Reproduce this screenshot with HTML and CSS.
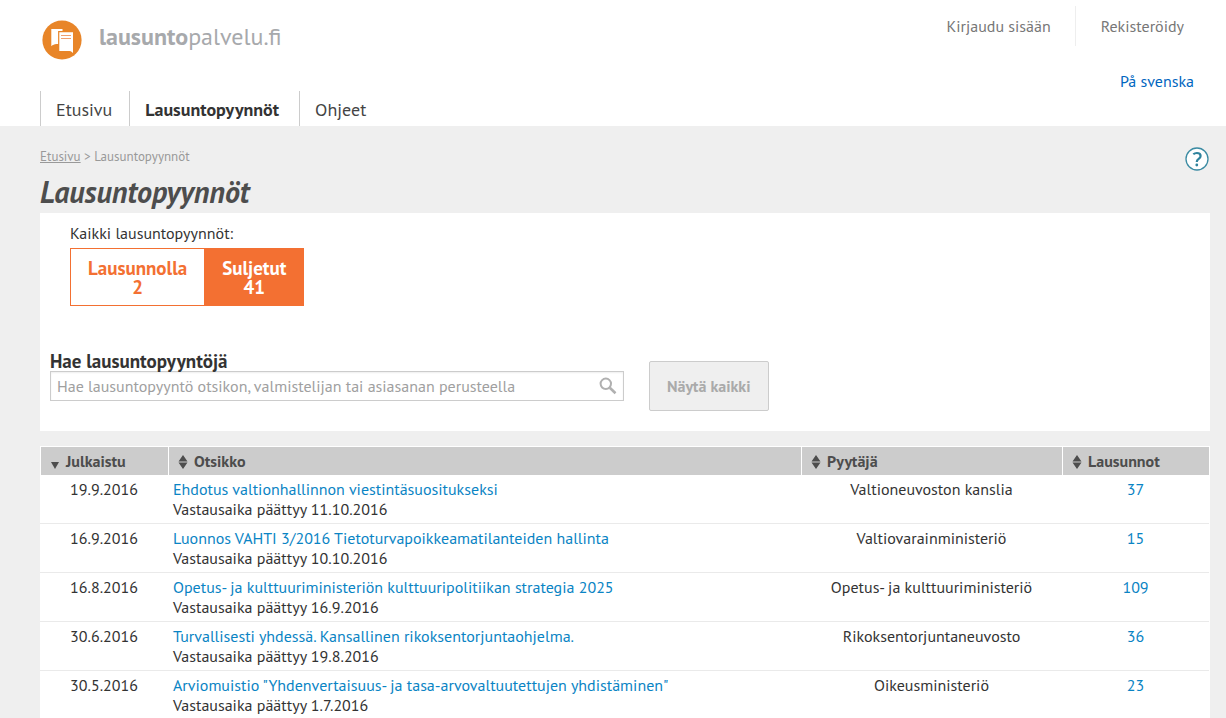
FILE: index.html
```html
<!DOCTYPE html>
<html lang="fi">
<head>
<meta charset="utf-8">
<title>Lausuntopyynnöt - lausuntopalvelu.fi</title>
<meta name="viewport" content="width=device-width, initial-scale=1">
<link rel="stylesheet" href="styles.css">
</head>
<body>
<header class="site-header">
  <div class="brand-column">
    <a class="brand" href="#">
      <svg class="brand-icon" viewBox="0 0 40 40" aria-hidden="true">
        <circle cx="20" cy="20" r="19.6" fill="#e88528"/>
        <path d="M9.300 9h11.200v15h-5c-2.500-.4-4.500.6-6.200 2.200z" fill="#fff"/>
        <path d="M17.300 12.200h13.700v20.800c-1.500-1.700-3-2-5-2h-8.700z" fill="#fff" stroke="#e88528" stroke-width="2.400" paint-order="stroke"/>
        <path d="M19 15.500h10M19 18.500h10" stroke="#f0a070" stroke-width="1.200"/>
      </svg>
      <span class="brand-name"><strong>lausunto</strong>palvelu.fi</span>
    </a>
    <nav class="main-nav">
      <a href="#">Etusivu</a>
      <a class="current" href="#">Lausuntopyynnöt</a>
      <a href="#">Ohjeet</a>
    </nav>
  </div>
  <div class="account-column">
    <div class="account-links">
      <a href="#">Kirjaudu sisään</a>
      <a href="#">Rekisteröidy</a>
    </div>
    <a class="language" href="#">På svenska</a>
  </div>
</header>

<main class="page">
  <div class="page-head">
    <div>
      <p class="breadcrumb"><a href="#">Etusivu</a> &gt; Lausuntopyynnöt</p>
      <h1>Lausuntopyynnöt</h1>
    </div>
    <button class="help" type="button" aria-label="Ohje">
      <svg viewBox="0 0 24 24" aria-hidden="true">
        <circle cx="12" cy="12" r="11" fill="#fff" stroke="#3b8ba3" stroke-width="1.300"/>
        <path d="M8.300 7.300c1-.9 2.200-1.300 3.600-1.300 2.200 0 3.700 1.200 3.700 3 0 2.900-3.800 2.900-3.800 5.700v.4" fill="none" stroke="#2f839d" stroke-width="2.200"/>
        <circle cx="11.800" cy="18" r="1.400" fill="#2f839d"/>
      </svg>
    </button>
  </div>

  <section class="panel">
    <div class="filter">
      <p>Kaikki lausuntopyynnöt:</p>
      <div class="tabs">
        <button class="tab" type="button"><span>Lausunnolla</span><span>2</span></button>
        <button class="tab selected" type="button"><span>Suljetut</span><span>41</span></button>
      </div>
    </div>
    <form class="search">
      <div class="search-field">
        <label for="query">Hae lausuntopyyntöjä</label>
        <div class="search-box">
          <input id="query" type="text" placeholder="Hae lausuntopyyntö otsikon, valmistelijan tai asiasanan perusteella">
          <button class="search-button" type="submit" aria-label="Hae">
            <svg viewBox="0 0 18 18" aria-hidden="true"><circle cx="6.800" cy="6.800" r="5.200" fill="none" stroke="#b0b0b0" stroke-width="2"/><path d="M10.800 10.800l5.700 5.500" stroke="#b0b0b0" stroke-width="2.600"/></svg>
          </button>
        </div>
      </div>
      <button class="show-all" type="button" disabled>Näytä kaikki</button>
    </form>
  </section>

  <table class="requests">
    <colgroup><col class="col-date"><col><col class="col-owner"><col class="col-count"></colgroup>
    <thead>
      <tr>
        <th><svg class="sort" viewBox="0 0 10 14" aria-hidden="true"><path d="M1 7h8l-4 7z"/></svg>Julkaistu</th>
        <th><svg class="sort" viewBox="0 0 10 14" aria-hidden="true"><path d="M5 0l4.500 6.500h-9zM5 14l4.500-6.500h-9z"/></svg>Otsikko</th>
        <th><svg class="sort" viewBox="0 0 10 14" aria-hidden="true"><path d="M5 0l4.500 6.500h-9zM5 14l4.500-6.500h-9z"/></svg>Pyytäjä</th>
        <th><svg class="sort" viewBox="0 0 10 14" aria-hidden="true"><path d="M5 0l4.500 6.500h-9zM5 14l4.500-6.500h-9z"/></svg>Lausunnot</th>
      </tr>
    </thead>
    <tbody>
      <tr><td>19.9.2016</td><td><a href="#">Ehdotus valtionhallinnon viestintäsuositukseksi</a><br>Vastausaika päättyy 11.10.2016</td><td>Valtioneuvoston kanslia</td><td><a href="#">37</a></td></tr>
      <tr><td>16.9.2016</td><td><a href="#">Luonnos VAHTI 3/2016 Tietoturvapoikkeamatilanteiden hallinta</a><br>Vastausaika päättyy 10.10.2016</td><td>Valtiovarainministeriö</td><td><a href="#">15</a></td></tr>
      <tr><td>16.8.2016</td><td><a href="#">Opetus- ja kulttuuriministeriön kulttuuripolitiikan strategia 2025</a><br>Vastausaika päättyy 16.9.2016</td><td>Opetus- ja kulttuuriministeriö</td><td><a href="#">109</a></td></tr>
      <tr><td>30.6.2016</td><td><a href="#">Turvallisesti yhdessä. Kansallinen rikoksentorjuntaohjelma.</a><br>Vastausaika päättyy 19.8.2016</td><td>Rikoksentorjuntaneuvosto</td><td><a href="#">36</a></td></tr>
      <tr><td>30.5.2016</td><td><a href="#">Arviomuistio "Yhdenvertaisuus- ja tasa-arvovaltuutettujen yhdistäminen"</a><br>Vastausaika päättyy 1.7.2016</td><td>Oikeusministeriö</td><td><a href="#">23</a></td></tr>
    </tbody>
  </table>
</main>
</body>
</html>
```
FILE: styles.css
```css
* { box-sizing: border-box; }
body {
  margin: 0;
  background: #efefef;
  color: #333;
  font: 16px/20px "PT Sans", "Noto Sans", sans-serif;
}
p, h1 { margin: 0; }
a { color: #0a84c4; text-decoration: none; }
button, input { font: inherit; margin: 0; }
button { cursor: pointer; }
svg { display: block; }

.site-header {
  display: flex;
  justify-content: space-between;
  background: #fff;
  padding: 0 32px 0 40px;
}
.brand { display: flex; align-items: center; gap: 17px; padding: 20px 0 31px 2px; }
.brand-icon { width: 40px; height: 40px; }
.brand-name { color: #a7a9ac; font-size: 24px; line-height: 30px; padding-bottom: 6px; }
.main-nav { display: flex; }
.main-nav a {
  border-left: 1px solid #ccc;
  padding: 7px 17px 4px 15px;
  color: #444;
  font-size: 18px;
  line-height: 24px;
}
.main-nav .current { font-weight: bold; color: #333; padding-right: 20px; }

.account-column { display: flex; flex-direction: column; align-items: flex-end; gap: 25px; padding-top: 6px; }
.account-links { display: flex; }
.account-links a { color: #777; padding: 10px 10px 10px 25px; }
.account-links a:first-child { padding: 10px 24px; border-right: 1px solid #eee; }
.language { color: #0066c0; }

.page { padding: 20px 16px 0 40px; }
.page-head { display: flex; justify-content: space-between; align-items: flex-start; }
.breadcrumb { color: #999; font-size: 13px; line-height: 22px; }
.breadcrumb a { color: #999; text-decoration: underline; }
h1 { color: #4d4d4d; font-size: 30px; line-height: 36px; font-style: italic; padding: 6px 0 3px; }
.help { border: 0; background: none; padding: 1px; border-radius: 50%; }
.help svg { width: 24px; height: 24px; }

.panel { background: #fff; padding: 10px 10px 20px; margin-bottom: 15px; }
.filter { padding-left: 20px; margin-bottom: 45px; }
.tabs { display: flex; padding-top: 5px; }
.tab {
  display: flex;
  flex-direction: column;
  align-items: center;
  border: 1px solid #f37032;
  background: #fff;
  color: #f37032;
  padding: 10px 17px 8px;
  font-size: 19px;
  line-height: 19px;
  font-weight: bold;
}
.tab + .tab { border-left: 0; }
.tab.selected { background: #f37032; color: #fff; }

.search { display: flex; align-items: flex-end; gap: 25px; }
.search-field { flex: 0 1 574px; padding-bottom: 10px; }
.search-field label { display: block; font-size: 19px; font-weight: bold; }
.search-box {
  display: flex;
  align-items: center;
  border: 1px solid #ccc;
  background: #fff;
  box-shadow: inset 0 1px 2px #eee;
}
.search-box input { flex: 1; min-width: 0; height: 28px; padding: 0 6px; border: 0; background: none; color: #333; }
.search-box input::placeholder { color: #a0a0a0; opacity: 1; }
.search-button { border: 0; background: none; padding: 0 6px; }
.search-button svg { width: 18px; height: 18px; }
.show-all {
  border: 1px solid #ccc;
  border-radius: 2px;
  background: #efefef;
  color: #aaa;
  font-weight: bold;
  padding: 14px 17px;
}

.requests { width: 100%; table-layout: fixed; border-collapse: separate; border-spacing: 0; background: #fff; border: 1px solid #fff; border-left: 0; }
.col-date { width: 128px; }
.col-owner { width: 261px; }
.col-count { width: 147px; }
th {
  background: #ccc;
  background-clip: padding-box;
  border-left: 1px solid #fff;
  color: #4d4d4d;
  text-align: left;
  height: 28px;
  padding: 0 9px;
}
th .sort { display: inline-block; width: 10px; height: 14px; margin-right: 6px; vertical-align: -2px; fill: #4d4d4d; }
td { border-bottom: 1px solid #eaeaea; padding: 4px; vertical-align: top; text-align: center; }
td:nth-child(2) { text-align: left; padding-left: 5px; }
```
